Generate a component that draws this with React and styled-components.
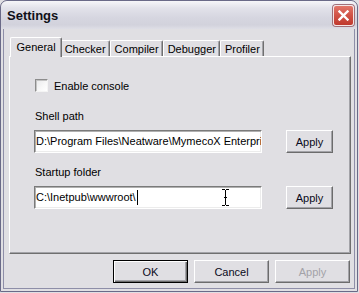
import React from "react";
import styled, { createGlobalStyle, css } from "styled-components";

const Global = createGlobalStyle`
  html, body { margin: 0; padding: 0; background: #e0dfe3; }
  body { font-family: "Liberation Sans", Arial, sans-serif; font-size: 11px; color: #000; }
  * { box-sizing: border-box; }
`;

const Window = styled.div`
  width: 358px;
  height: 292px;
  border: 1px solid #6a6a88;
  border-radius: 7px 7px 0 0;
  background: #e0dfe3;
  box-shadow: inset 0 0 0 2px #e0dfe3, inset 0 0 0 3px #8e8ea8;
  display: flex;
  flex-direction: column;
  overflow: hidden;
`;

const TitleBar = styled.div`
  height: 28px;
  flex: none;
  display: flex;
  align-items: center;
  justify-content: space-between;
  padding: 0 3px 0 6px;
  border-radius: 6px 6px 0 0;
  background: linear-gradient(#f6f6f9 0%, #e2e2ea 25%, #d6d6e0 60%, #d2d2dc 85%, #dedee6 100%);
`;

const Title = styled.span`
  font-family: "Liberation Sans", Arial, sans-serif;
  font-weight: bold;
  font-size: 13px;
  color: #101018;
  padding-top: 1px;
`;

const CloseButton = styled.div`
  width: 21px;
  height: 21px;
  margin-top: 1px;
  border-radius: 3px;
  border: 1px solid #f4e6e6;
  background: linear-gradient(#e2776a 0%, #d2564a 45%, #c0392e 100%);
  box-shadow: 0 0 0 1px #a0707a;
  display: flex;
  align-items: center;
  justify-content: center;
`;

const Body = styled.div`
  flex: 1;
  display: flex;
  flex-direction: column;
  padding: 8px 6px 0 8px;
`;

const TabStrip = styled.div`
  display: flex;
  align-items: flex-end;
  height: 19px;
  padding-left: 3px;
`;

const Tab = styled.div`
  position: relative;
  height: 16px;
  padding: 0 3.5px;
  display: flex;
  align-items: center;
  white-space: nowrap;
  background: #e0dfe3;
  border-top: 1px solid #fff;
  border-left: 1px solid #fff;
  border-right: 1px solid #6f6f6f;
  border-radius: 2px 2px 0 0;
  box-shadow: inset -1px 0 0 #a3a3a8;
  ${(p) =>
    p.$active &&
    css`
      z-index: 1;
      height: 20px;
      margin: 0 -2px -1px;
      padding: 0 5.5px 2px;
    `}
`;

const Panel = styled.div`
  height: 198px;
  flex: none;
  border-top: 1px solid #fff;
  border-left: 1px solid #fff;
  border-right: 1px solid #6f6f6f;
  border-bottom: 1px solid #6f6f6f;
  box-shadow: inset -1px -1px 0 #a3a3a8;
  padding: 22px 0 0 24px;
  display: flex;
  flex-direction: column;
`;

const CheckRow = styled.label`
  display: flex;
  align-items: center;
  gap: 6px;
  height: 13px;
  margin-left: 1px;
`;

const CheckBox = styled.span`
  width: 13px;
  height: 13px;
  border: 1px solid;
  border-color: #8c8c8c #f4f4f4 #f4f4f4 #8c8c8c;
  box-shadow: inset 1px 1px 0 #c4c4c4;
  background: linear-gradient(135deg, #e8e8ea 0%, #f8f8f8 60%, #ffffff 100%);
`;

const FieldLabel = styled.div`
  line-height: 13px;
  margin-left: 1px;
  margin-top: ${(p) => p.$gap}px;
`;

const FieldRow = styled.div`
  display: flex;
  gap: 24px;
  margin-top: 7px;
  height: 23px;
`;

const TextBox = styled.div`
  position: relative;
  width: 228px;
  height: 23px;
  background: #fff;
  border: 1px solid;
  border-color: #7a7a7a #ffffff #ffffff #7a7a7a;
  box-shadow: inset 1px 1px 0 #b0b0b0, inset -1px -1px 0 #ececec;
  padding: 0 0 0 1px;
  display: flex;
  align-items: center;
  overflow: hidden;
  white-space: nowrap;
  line-height: 13px;
`;

const Caret = styled.span`
  display: inline-block;
  width: 1px;
  height: 15px;
  background: #000;
  margin-left: 1px;
`;

const Pointer = styled.svg`
  position: absolute;
  left: 187px;
  top: 2px;
`;

const Button = styled.div`
  width: ${(p) => p.$w}px;
  height: 23px;
  display: flex;
  align-items: center;
  justify-content: center;
  background: #e0dfe3;
  color: ${(p) => (p.$disabled ? "#a3a2a8" : "#0a0a20")};
  border: 1px solid;
  border-color: #fff #6c6c6c #6c6c6c #fff;
  box-shadow: inset -1px -1px 0 #a3a3a8;
  ${(p) =>
    p.$default &&
    css`
      border-color: #000;
      box-shadow: inset 1px 1px 0 #fff, inset -1px -1px 0 #6c6c6c,
        inset -2px -2px 0 #a3a3a8;
    `}
`;

const ButtonRow = styled.div`
  display: flex;
  justify-content: flex-end;
  gap: 6px;
  margin-top: 6px;
  padding-right: 1px;
`;

const tabs = ["General", "Checker", "Compiler", "Debugger", "Profiler"];

export default function App() {
  return (
    <>
      <Global />
      <Window>
        <TitleBar>
          <Title>Settings</Title>
          <CloseButton>
            <svg width="11" height="11" viewBox="0 0 11 11">
              <path d="M1.5 1.5L9.5 9.5M9.5 1.5L1.5 9.5" stroke="#fff" strokeWidth="2.4" strokeLinecap="square" />
            </svg>
          </CloseButton>
        </TitleBar>
        <Body>
          <TabStrip>
            {tabs.map((t, i) => (
              <Tab key={t} $active={i === 0}>
                {t}
              </Tab>
            ))}
          </TabStrip>
          <Panel>
            <CheckRow>
              <CheckBox />
              Enable console
            </CheckRow>
            <FieldLabel $gap={18}>Shell path</FieldLabel>
            <FieldRow>
              <TextBox>D:\Program Files\Neatware\MymecoX Enterprise\</TextBox>
              <Button $w={47}>Apply</Button>
            </FieldRow>
            <FieldLabel $gap={13}>Startup folder</FieldLabel>
            <FieldRow>
              <TextBox>
                C:\Inetpub\wwwroot\
                <Caret />
                <Pointer width="7" height="17" viewBox="0 0 7 17">
                  <path d="M0 0.5h3M4 0.5h3M3.5 1v15M0 16.5h3M4 16.5h3M2 8.5h3" stroke="#000" strokeWidth="1" fill="none" />
                </Pointer>
              </TextBox>
              <Button $w={47}>Apply</Button>
            </FieldRow>
          </Panel>
          <ButtonRow>
            <Button $w={75} $default>OK</Button>
            <Button $w={75}>Cancel</Button>
            <Button $w={75} $disabled>Apply</Button>
          </ButtonRow>
        </Body>
      </Window>
    </>
  );
}
